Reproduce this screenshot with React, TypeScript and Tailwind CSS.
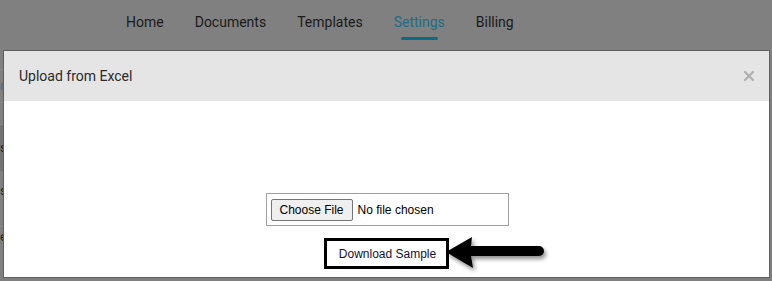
import React from "react";

const navItems = ["Home", "Documents", "Templates", "Settings", "Billing"];

export default function App() {
  return (
    <div className="w-[772px] h-[281px] bg-[#808080] overflow-hidden flex flex-col" style={{ fontFamily: "Roboto, 'Liberation Sans', sans-serif" }}>
      {/* Dimmed top navigation */}
      <nav className="h-[50px] flex items-start pl-[126px] gap-[31px] shrink-0">
        {navItems.map((item) => (
          <div key={item} className="flex flex-col items-center pt-[12px]">
            <span className={`text-[14px] leading-[20px] ${item === "Settings" ? "text-[#1c6e88]" : "text-[#1a1a1a]"}`}>{item}</span>
            {item === "Settings" && <span className="mt-[5px] w-[37px] h-[3px] rounded-full bg-[#0d6a85]" />}
          </div>
        ))}
      </nav>

      <div className="flex flex-1 min-h-0">
        {/* Sliver of background page content */}
        <div className="w-[3px] shrink-0 flex flex-col">
          <div className="h-[20px] border-b border-[#8a8a8a]" />
          <div className="h-[33px] border-b border-[#8a8a8a] text-[12px] text-[#3e6f8a] leading-[33px] overflow-hidden">r</div>
          <div className="h-[22px] border-b border-[#8a8a8a]" />
          <div className="h-[46px] bg-[#737373] text-[13px] text-[#222] leading-[46px] overflow-hidden">s</div>
          <div className="h-[56px] border-b border-[#8a8a8a] text-[13px] text-[#222] leading-[40px] overflow-hidden">s</div>
          <div className="h-[20px] text-[13px] text-[#222] leading-[20px] overflow-hidden">e</div>
        </div>

        {/* Modal */}
        <div className="w-[767px] h-[228px] border border-[#5e5e5e] bg-white flex flex-col shrink-0">
          <div className="h-[50px] bg-[#e5e5e5] flex items-center justify-between pl-[15px] pr-[14px] shrink-0">
            <span className="text-[14px] font-normal text-[#2a2a2a]">Upload from Excel</span>
            <svg width="10" height="10" viewBox="0 0 10 10" className="mr-[1px]">
              <path d="M1 1 L9 9 M9 1 L1 9" stroke="#b0b0b0" strokeWidth="2.2" strokeLinecap="square" />
            </svg>
          </div>
          <div className="flex flex-col items-center pt-[92px] pl-[1px]" style={{ fontFamily: "'Liberation Sans', Arial, sans-serif" }}>
            <div className="w-[243px] h-[33px] border border-[#a0a0a0] flex items-center pl-[4px] gap-[5px]">
              <button className="h-[22px] px-[8px] bg-[#efefef] border border-[#767676] rounded-[2px] text-[12px] text-black leading-none">Choose File</button>
              <span className="text-[12px] text-black">No file chosen</span>
            </div>
            <div className="relative mt-[12px] ml-[-2px]">
              <div className="w-[125px] h-[31px] border-[3px] border-black flex items-center justify-center pl-[3px] text-[12px] text-[#141030]">
                Download Sample
              </div>
              <svg
                width="104"
                height="38"
                viewBox="0 0 104 38"
                className="absolute left-[120px] top-[-3px] drop-shadow-[2px_3px_2px_rgba(0,0,0,0.45)]"
              >
                <path d="M2 17 L28 2 L27 11 L95 11 A5 5 0 0 1 95 21 L27 21 L29 33 Z" fill="#000" />
              </svg>
            </div>
          </div>
        </div>
      </div>
    </div>
  );
}
